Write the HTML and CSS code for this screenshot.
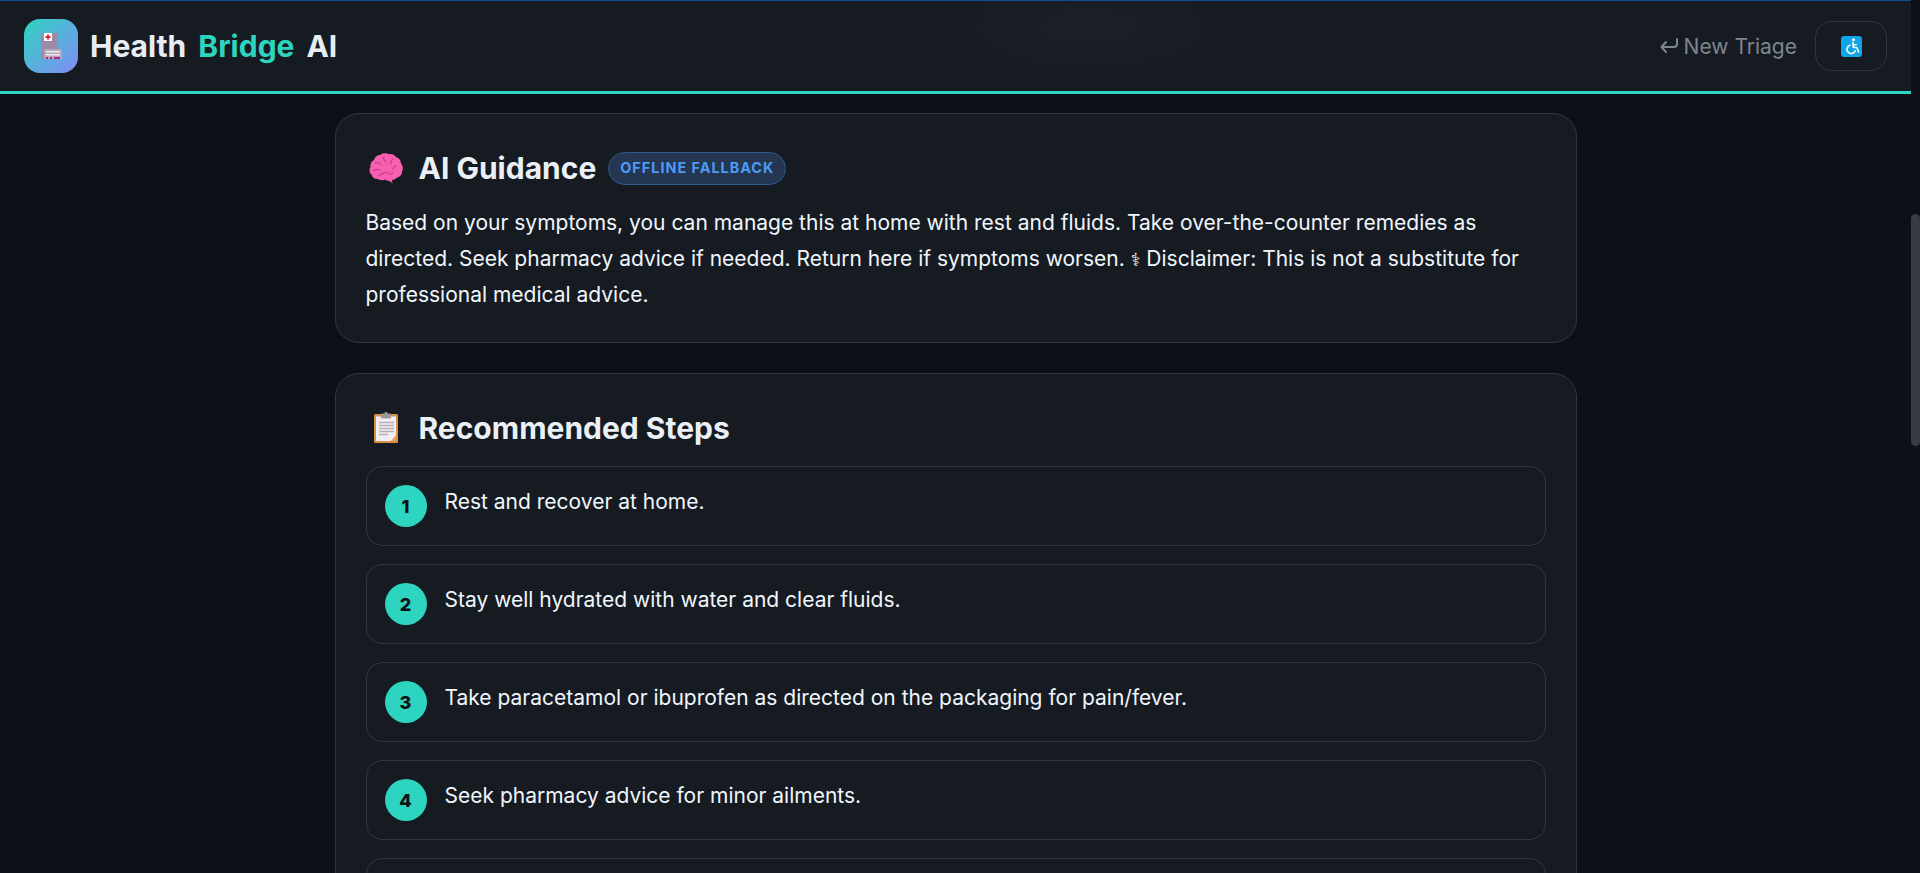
FILE: index.html
```html
<!DOCTYPE html>
<html lang="en">
<head>
<meta charset="utf-8">
<title>HealthBridge AI</title>
<link rel="stylesheet" href="styles.css">
</head>
<body>
<div class="app">
  <div class="page">
    <header class="topbar">
      <div class="brand">
        <div class="logo">
          <svg viewBox="0 0 54 54" width="54" height="54">
            <rect x="17" y="14" width="17" height="26" rx="1" fill="#9d8aa6"/>
            <rect x="20" y="14" width="8" height="8" fill="#fff"/>
            <path d="M23 15.500h2v1.500h1.500v2H25v1.500h-2V19h-1.500v-2H23z" fill="#ea2a38"/>
            <rect x="20" y="30" width="18" height="10" rx="1" fill="#b3a8bd"/>
            <rect x="22" y="32" width="14" height="1.500" fill="#eee9f0"/>
            <rect x="22" y="35" width="14" height="1.500" fill="#eee9f0"/>
            <rect x="22" y="38" width="2" height="2" fill="#b2267f"/>
            <rect x="26" y="38" width="2" height="2" fill="#b2267f"/>
            <rect x="30" y="38" width="6" height="2" fill="#b2267f"/>
          </svg>
        </div>
        <div class="wordmark"><span>Health</span><span class="accent">Bridge</span><span>AI</span></div>
      </div>
      <div class="actions">
        <a class="new-triage">
          <svg viewBox="0 0 18 16" width="18" height="16"><path d="M17 1v5a3 3 0 0 1-3 3H1.500M6 4L1.500 9 6 14" fill="none" stroke="#7d8590" stroke-width="2" stroke-linecap="round" stroke-linejoin="round"/></svg>
          <span>New Triage</span>
        </a>
        <button class="a11y">
          <svg viewBox="0 0 21 21" width="21" height="21">
            <rect width="21" height="21" rx="3" fill="#0ea5e9"/>
            <circle cx="12.500" cy="3.800" r="1.500" fill="#fff"/>
            <path d="M11.800 6.500l.6 5h3.400l1.800 4.400M12 8.800h3.200M8.800 9.200a4.300 4.300 0 1 0 5.500 5.500" fill="none" stroke="#fff" stroke-width="1.600" stroke-linecap="round" stroke-linejoin="round"/>
          </svg>
        </button>
      </div>
    </header>
    <main class="content">
      <section class="card">
        <h2 class="card-title">
          <svg class="emoji" viewBox="0 0 34 32" width="34" height="32">
            <path d="M20 29c-2 0-3-1-4-1.500-2 1-5 1-7-.5-3 .5-6-1.500-6.500-4.500C0 21 0 17 1.500 15 1 12 2.500 9 5 8c.5-3 3-5 6-5 2-2 6-2.500 8.500-1 3-.5 6 .5 7.500 3 3 1 5 3.500 5 6.500 2 2 2.500 5.500 1 8 0 3-2 5.500-5 6-1 1.500-3 2.500-5 2.500l.5 3.500-1.500-1.500z" fill="#f75fb0"/>
            <path d="M6 11c3-1 5 0 6 2M15 5c-1 2 0 4 2 5M24 7c-2 1-3 3-2 5M4 19c2-2 5-2 7-1M13 22c3-1 5-3 6-1s3 1 5 0M27 14c-2 0-3 1-3 3M9 24c1-1 2-2 4-2" fill="none" stroke="#c42c83" stroke-width="1" stroke-linecap="round"/>
          </svg>
          <span>AI Guidance</span>
          <span class="badge">OFFLINE FALLBACK</span>
        </h2>
        <p class="guidance">Based on your symptoms, you can manage this at home with rest and fluids. Take over-the-counter remedies as directed. Seek pharmacy advice if needed. Return here if symptoms worsen. <span class="rod">⚕</span> Disclaimer: This is not a substitute for professional medical advice.</p>
      </section>
      <section class="card">
        <h2 class="card-title">
          <svg class="emoji" viewBox="0 0 34 32" width="34" height="32">
            <rect x="5" y="2" width="24" height="29" rx="1.500" fill="#d98f45"/>
            <path d="M7 4.500h20v19l-5 5.500H7z" fill="#f3eef3"/>
            <path d="M27 23.500V29h-5z" fill="#e8a962"/>
            <rect x="12" y="1.500" width="10" height="5" rx="1" fill="#9a9a9a"/>
            <rect x="15.500" y="0" width="3" height="2" rx="1" fill="#9a9a9a"/>
            <path d="M10 10.500h15M10 13.500h15M10 16.500h15M10 19.500h15M10 22.500h9" stroke="#b5b1b7" stroke-width="1.300"/>
          </svg>
          <span>Recommended Steps</span>
        </h2>
        <ol class="steps">
          <li class="step"><span class="num">1</span><span class="step-text">Rest and recover at home.</span></li>
          <li class="step"><span class="num">2</span><span class="step-text">Stay well hydrated with water and clear fluids.</span></li>
          <li class="step"><span class="num">3</span><span class="step-text">Take paracetamol or ibuprofen as directed on the packaging for pain/fever.</span></li>
          <li class="step"><span class="num">4</span><span class="step-text">Seek pharmacy advice for minor ailments.</span></li>
          <li class="step"></li>
        </ol>
      </section>
    </main>
  </div>
  <div class="rail"><div class="thumb"></div></div>
</div>
</body>
</html>
```
FILE: styles.css
```css
* { box-sizing: border-box; }
html, body { margin: 0; height: 100%; overflow: hidden; }
body { background: #0d1117; color: #f0f4f8; font-family: Inter, "DejaVu Sans", sans-serif; }
.app { display: flex; height: 873px; }
.page { flex: 1; min-width: 0; display: flex; flex-direction: column; overflow: hidden; }
.rail { width: 9px; padding-top: 214px; }
.thumb { height: 232px; background: #353c43; border-radius: 5px; }

.topbar { flex: none; height: 94px; display: flex; align-items: center; justify-content: space-between; padding: 0 24px; background: radial-gradient(ellipse 170px 60px at 1090px 25px, #1c2028, #161b22); border-top: 1px solid #0f4c96; border-bottom: 3px solid #2dd4bf; }
.brand { display: flex; align-items: center; gap: 12px; }
.logo { width: 54px; height: 54px; border-radius: 16px; background: linear-gradient(135deg, #2dd4bf, #818cf8); }
.logo svg { display: block; }
.wordmark { display: flex; gap: 12px; font-size: 30px; font-weight: 700; color: #e6edf3; }
.accent { color: #2dd4bf; }
.actions { display: flex; align-items: center; gap: 18px; }
.new-triage { display: flex; align-items: center; gap: 6px; font-size: 21px; color: #7d8590; }
.a11y { width: 72px; height: 50px; display: flex; align-items: center; justify-content: center; padding: 0; background: transparent; border: 1px solid #30363d; border-radius: 16px; }

.content { flex: 1; min-height: 0; width: 1242px; margin: 0 auto; padding-top: 19px; display: flex; flex-direction: column; gap: 30px; }
.card { flex: none; padding: 30px; background: #161b22; border: 1px solid #30363d; border-radius: 24px; }
.card-title { display: flex; align-items: center; margin: 0 0 14px; font-size: 30px; font-weight: 700; line-height: 48px; color: #eaf0f6; }
.emoji { margin-left: 3px; margin-right: 16px; flex: none; }
.badge { margin-left: 12px; padding: 0 11px; height: 33px; display: flex; align-items: center; font-size: 14.4px; letter-spacing: 1px; color: #4c9bf7; background: #243650; border: 1px solid #2f5a8f; border-radius: 17px; }
.guidance { margin: -1px 0 -1px; font-size: 21px; line-height: 35.7px; color: #f0f6fc; }
.rod { font-family: "DejaVu Sans", sans-serif; font-size: 18px; }
.steps { list-style: none; margin: 0; padding: 0; display: flex; flex-direction: column; gap: 18px; }
.step { height: 80px; display: flex; align-items: flex-start; gap: 18px; padding: 18px; border: 1px solid #30363d; border-radius: 16px; }
.num { flex: none; width: 42px; height: 42px; border-radius: 50%; display: flex; align-items: center; justify-content: center; font-size: 18px; font-weight: 800; color: #0d1117; background: #2dd4bf; }
.step-text { font-size: 21px; line-height: 34px; color: #f0f6fc; }
```
